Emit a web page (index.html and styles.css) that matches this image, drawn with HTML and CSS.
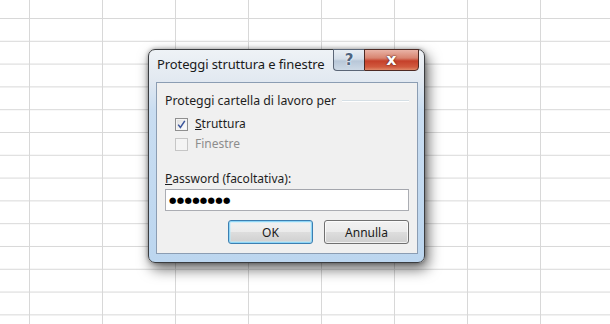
FILE: index.html
```html
<!DOCTYPE html>
<html lang="it">
<head>
<meta charset="utf-8">
<title>Proteggi struttura e finestre</title>
<link rel="stylesheet" href="styles.css">
</head>
<body>
<div class="sheet">
  <div class="window">
    <div class="titlebar">
      <span class="title">Proteggi struttura e finestre</span>
      <div class="caption-buttons">
        <button class="cap-help" type="button">?</button>
        <button class="cap-close" type="button">x</button>
      </div>
    </div>
    <div class="client">
      <div class="group">
        <span class="group-label">Proteggi cartella di lavoro per</span>
        <span class="group-line"></span>
      </div>
      <div class="check-row">
        <span class="checkbox checked">
          <svg width="11" height="11" viewBox="0 0 11 11"><path d="M2.2 5.6 L4.4 8.4 L8.8 1.8" fill="none" stroke="#3b559b" stroke-width="1.5"/></svg>
        </span>
        <span class="check-label"><u>S</u>truttura</span>
      </div>
      <div class="check-row disabled">
        <span class="checkbox"></span>
        <span class="check-label">Finestre</span>
      </div>
      <div class="pw-label"><u>P</u>assword (facoltativa):</div>
      <div class="pw-input">&#9679;&#9679;&#9679;&#9679;&#9679;&#9679;&#9679;&#9679;</div>
      <div class="buttons">
        <button class="btn default" type="button">OK</button>
        <button class="btn" type="button">Annulla</button>
      </div>
    </div>
  </div>
</div>
</body>
</html>
```
FILE: styles.css
```css
html, body {
  margin: 0;
  padding: 0;
}
body {
  width: 610px;
  height: 324px;
  overflow: hidden;
  background-color: #ffffff;
  font-family: "Noto Sans", "Open Sans", "DejaVu Sans", sans-serif;
  font-size: 12px;
  color: #1e1e1e;
}
.sheet {
  width: 610px;
  height: 324px;
  background-color: #ffffff;
  background-image:
    linear-gradient(to right, #d8d8d8 1px, transparent 1px),
    linear-gradient(to bottom, #d8d8d8 1px, transparent 1px);
  background-size: 73px 22.8px;
  background-position: 29px 18px;
  padding: 49px 0 0 148px;
  box-sizing: border-box;
}
.window {
  width: 277px;
  box-sizing: border-box;
  border: 1px solid #3b3d40;
  border-radius: 7px;
  background: linear-gradient(to bottom, #eef2f6 0px, #e2e9f1 30px, #c9ddf1 60px, #bcd6ef 100%);
  box-shadow: 3px 6px 14px rgba(0, 0, 0, 0.6), 0 0 4px rgba(0, 0, 0, 0.35);
}
.titlebar {
  height: 32px;
  display: flex;
  align-items: flex-start;
  justify-content: space-between;
}
.title {
  padding: 6px 0 0 8px;
  font-size: 13px;
  line-height: 17px;
  color: #1a1a1a;
  letter-spacing: -0.1px;
}
.caption-buttons {
  display: flex;
  margin: -1px 5px 0 0;
}
.caption-buttons button {
  height: 22px;
  box-sizing: border-box;
  padding: 0;
  font-family: "DejaVu Sans", sans-serif;
  font-weight: bold;
  line-height: 18px;
  color: #fff;
  cursor: default;
}
.cap-help {
  width: 31px;
  border: 1px solid #5b6677;
  border-right: none;
  border-radius: 0 0 0 4px;
  background: linear-gradient(to bottom, #e8eef4 0%, #d3dde8 45%, #b8c7d8 55%, #cdd9e6 100%);
  font-size: 15px;
  color: #4f6580 !important;
  text-shadow: 0 0 1px #fff, 0 0 2px #fff;
}
.cap-close {
  width: 55px;
  border: 1px solid #4d2a24;
  border-radius: 0 0 4px 0;
  background: linear-gradient(to bottom, #e9b3a6 0%, #d88470 40%, #c5402a 55%, #d15b3f 85%, #e08a6a 100%);
  font-size: 16px;
  text-shadow: 0 0 2px #5a1f16, 0 0 1px #5a1f16;
}
.client {
  margin: 0 6px 8px 7px;
  border: 1px solid #8b9db3;
  background: #f0f0f0;
  padding: 10px 8px 9px 8px;
}
.group {
  display: flex;
  align-items: center;
  height: 16px;
}
.group-label {
  line-height: 16px;
  white-space: nowrap;
  font-size: 12.3px;
}
.group-line {
  flex: 1;
  margin-left: 6px;
  border-top: 1px solid #d5dfe5;
  border-bottom: 1px solid #ffffff;
}
.check-row {
  display: flex;
  align-items: center;
  height: 20px;
  padding-left: 10px;
  gap: 7px;
}
.group + .check-row {
  margin-top: 5px;
}
.checkbox {
  width: 13px;
  height: 13px;
  box-sizing: border-box;
  border: 1px solid #8f8f8f;
  background: linear-gradient(135deg, #dcdcdc 0%, #f4f4f4 60%, #ffffff 100%);
  box-shadow: inset 0 0 0 1px #f4f4f4;
  display: flex;
  align-items: center;
  justify-content: center;
}
.checkbox svg {
  display: block;
}
.disabled .checkbox {
  border-color: #c6c6c6;
  background: #f4f4f4;
  box-shadow: none;
}
.disabled .check-label {
  color: #8d8d8d;
}
.check-label {
  line-height: 16px;
}
.pw-label {
  margin-top: 17px;
  line-height: 16px;
}
.pw-input {
  margin-top: 2px;
  height: 22px;
  box-sizing: border-box;
  border: 1px solid #abadb3;
  border-top-color: #a4a6ad;
  background: #ffffff;
  padding: 0 0 0 3px;
  font-family: "DejaVu Sans", sans-serif;
  font-size: 8.5px;
  line-height: 20px;
  letter-spacing: 0.3px;
  color: #000;
}
.buttons {
  margin-top: 9px;
  display: flex;
  justify-content: flex-end;
  gap: 11px;
}
.btn {
  width: 85px;
  height: 24px;
  box-sizing: border-box;
  border: 1px solid #707070;
  border-radius: 3px;
  background: linear-gradient(to bottom, #f2f2f2 0%, #ebebeb 48%, #dddddd 52%, #cfcfcf 100%);
  box-shadow: inset 0 0 0 1px rgba(255, 255, 255, 0.7);
  font-family: "Noto Sans", "Open Sans", sans-serif;
  font-size: 12px;
  color: #1a1a1a;
  padding: 0;
  cursor: default;
}
.btn.default {
  border-color: #3c7fb1;
  box-shadow: inset 0 0 0 1px #8fd6f7, inset 0 0 0 2px rgba(190, 235, 252, 0.5);
}
```
